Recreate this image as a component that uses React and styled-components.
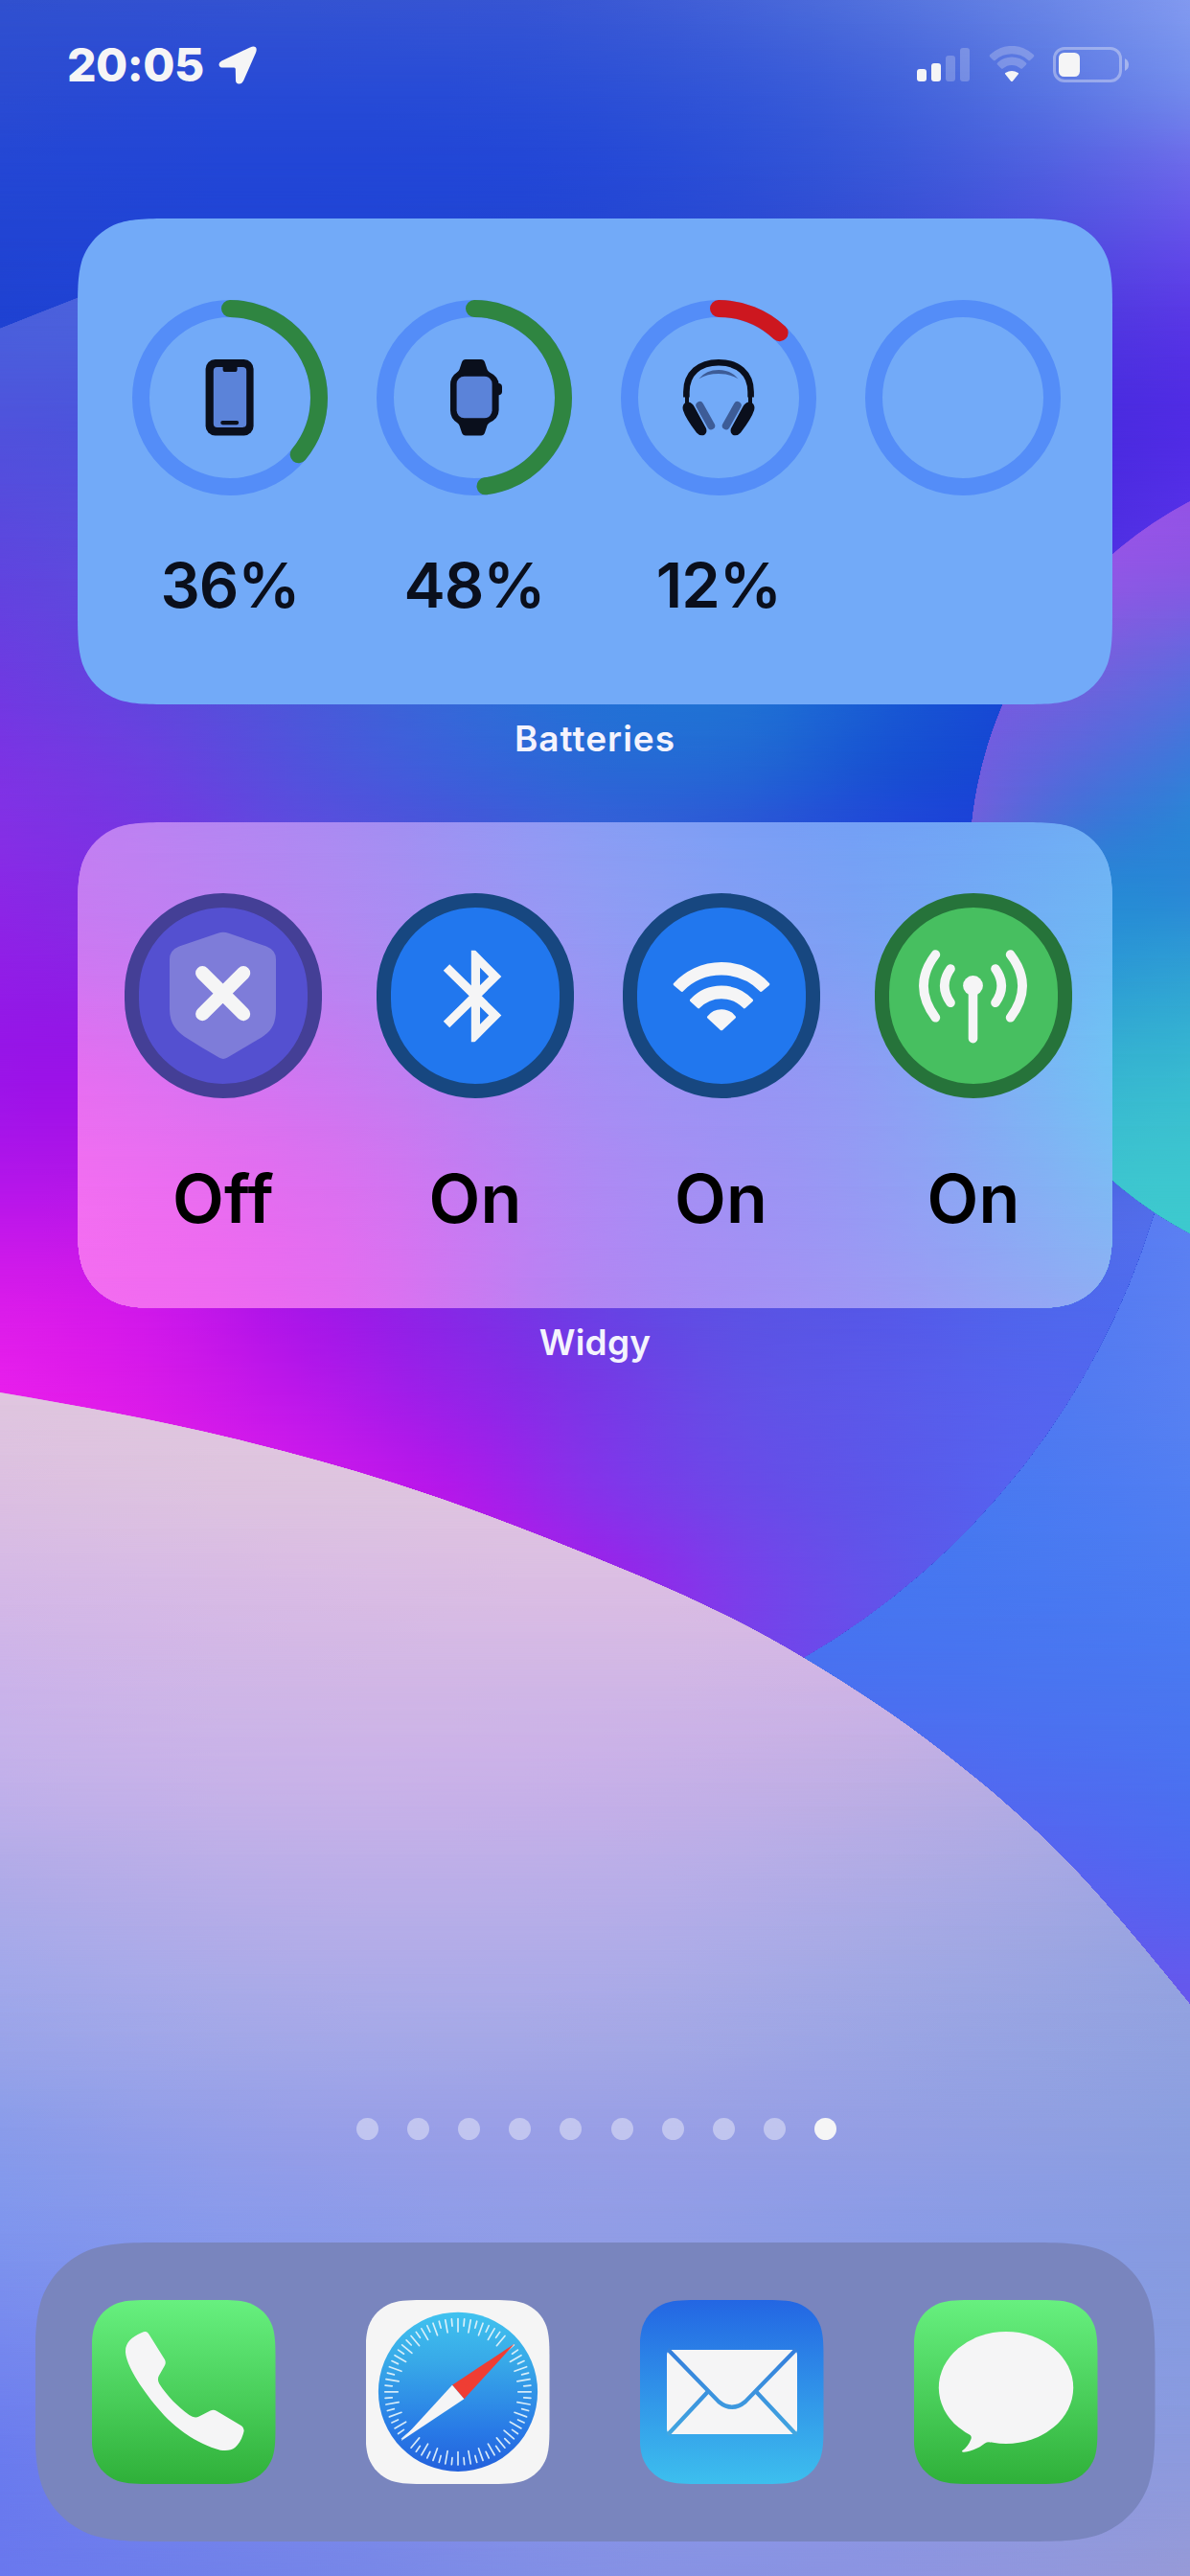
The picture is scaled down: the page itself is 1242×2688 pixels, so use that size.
import React from "react";
import styled, { createGlobalStyle } from "styled-components";

const FONT = `Inter, "Liberation Sans", Arial, sans-serif`;
const WHITE = "#f5f5f6";

const GlobalStyle = createGlobalStyle`
  *, *::before, *::after { box-sizing: border-box; }
  html, body { margin: 0; padding: 0; background: #2346d4; }
`;

/* Continuous-curvature rounded rectangle, as used by iOS surfaces. */
const squircle = (w, h, r) => {
  const a = 1.52866483 * r;
  const b = 1.08849299 * r;
  const c = 0.86840689 * r;
  const d = 0.63149399 * r;
  const e = 0.074911 * r;
  const f = 0.37282392 * r;
  const g = 0.16905899 * r;
  return [
    `M${a} 0H${w - a}`,
    `C${w - b} 0 ${w - c} 0 ${w - d} ${e}`,
    `C${w - f} ${g} ${w - g} ${f} ${w - e} ${d}`,
    `C${w} ${c} ${w} ${b} ${w} ${a}V${h - a}`,
    `C${w} ${h - b} ${w} ${h - c} ${w - e} ${h - d}`,
    `C${w - g} ${h - f} ${w - f} ${h - g} ${w - d} ${h - e}`,
    `C${w - c} ${h} ${w - b} ${h} ${w - a} ${h}H${a}`,
    `C${b} ${h} ${c} ${h} ${d} ${h - e}`,
    `C${f} ${h - g} ${g} ${h - f} ${e} ${h - d}`,
    `C0 ${h - c} 0 ${h - b} 0 ${h - a}V${a}`,
    `C0 ${b} 0 ${c} ${e} ${d}`,
    `C${g} ${f} ${f} ${g} ${d} ${e}`,
    `C${c} 0 ${b} 0 ${a} 0Z`,
  ].join("");
};

/* Tangents of a smooth curve through (xs[i], ys[i]). */
const tangentsOf = (xs, ys) => {
  const slope = xs.slice(1).map((x, i) => (ys[i + 1] - ys[i]) / (x - xs[i]));
  const gap = xs.slice(1).map((x, i) => x - xs[i]);
  const inner = slope.slice(1).map((s, i) => (slope[i] * gap[i + 1] + s * gap[i]) / (gap[i] + gap[i + 1]));
  const first = slope.length > 1 ? 1.5 * slope[0] - 0.5 * inner[0] : slope[0];
  const last = slope.length > 1 ? 1.5 * slope[slope.length - 1] - 0.5 * inner[inner.length - 1] : slope[0];
  return [first, ...inner, last];
};

/* Resample a list of values with STEPS points per span. */
const STEPS = 4;
const resample = (xs, ys) => {
  const m = tangentsOf(xs, ys);
  const out = [];
  for (let i = 0; i < xs.length - 1; i += 1) {
    const w = xs[i + 1] - xs[i];
    for (let s = 0; s < STEPS; s += 1) {
      const t = s / STEPS;
      const t2 = t * t;
      const t3 = t2 * t;
      out.push(
        (2 * t3 - 3 * t2 + 1) * ys[i] + (t3 - 2 * t2 + t) * w * m[i] + (3 * t2 - 2 * t3) * ys[i + 1] + (t3 - t2) * w * m[i + 1]
      );
    }
  }
  out.push(ys[ys.length - 1]);
  return out;
};

const channels = (hex) => [1, 3, 5].map((i) => parseInt(hex.slice(i, i + 2), 16));
const clamp = (v) => Math.max(0, Math.min(255, v)).toFixed(1);

const refine = (rows) => {
  const ys = rows.map(([y]) => y);
  const wide = rows.map(([, colors]) => {
    const xs = colors.map((_, i) => i);
    const rgb = colors.map(channels);
    return [0, 1, 2].map((c) => resample(xs, rgb.map((v) => v[c])));
  });
  const columns = wide[0][0].length;
  const fineY = ys.slice(1).flatMap((y, i) => Array.from({ length: STEPS }, (_, s) => ys[i] + ((y - ys[i]) * s) / STEPS));
  fineY.push(ys[ys.length - 1]);
  const grid = Array.from({ length: columns }, (_, j) => [0, 1, 2].map((c) => resample(ys, wide.map((row) => row[c][j]))));
  return fineY.map((y, i) => [y, grid.map((col) => `rgb(${col.map((v) => clamp(v[i])).join(",")})`)]);
};

/* Smooth path through points, left to right. */
const curveThrough = (points) => {
  const xs = points.map(([x]) => x);
  const ys = points.map(([, y]) => y);
  const m = tangentsOf(xs, ys);
  return points.slice(1).reduce((path, [x, y], i) => {
    const w = (x - xs[i]) / 3;
    return `${path}C${xs[i] + w} ${ys[i] + w * m[i]} ${x - w} ${y - w * m[i + 1]} ${x} ${y}`;
  }, `M${xs[0]} ${ys[0]}`);
};

/* Two-way gradient: each row is a horizontal gradient that fades in over the previous one. */
function Mesh({ id, x, width, rows: knots, clip }) {
  const rows = refine(knots);
  const bottom = rows[rows.length - 1][0];
  return (
    <g clipPath={clip ? `url(#${clip})` : undefined}>
      <defs>
        {rows.map(([, colors], i) => (
          <linearGradient key={i} id={`${id}-row-${i}`} gradientUnits="userSpaceOnUse" x1={x} x2={x + width} y1="0" y2="0">
            {colors.map((color, j) => (
              <stop key={j} offset={j / (colors.length - 1)} stopColor={color} />
            ))}
          </linearGradient>
        ))}
        {rows.slice(1).map(([y], i) => (
          <React.Fragment key={i}>
            <linearGradient id={`${id}-fade-${i + 1}`} gradientUnits="userSpaceOnUse" x1="0" x2="0" y1={rows[i][0]} y2={y}>
              <stop offset="0" stopColor="#fff" stopOpacity="0" />
              <stop offset="1" stopColor="#fff" stopOpacity="1" />
            </linearGradient>
            <mask id={`${id}-mask-${i + 1}`} maskUnits="userSpaceOnUse" x={x} y={rows[i][0]} width={width} height={bottom - rows[i][0]}>
              <rect x={x} y={rows[i][0]} width={width} height={bottom - rows[i][0]} fill={`url(#${id}-fade-${i + 1})`} />
            </mask>
          </React.Fragment>
        ))}
      </defs>
      {rows.map(([y], i) => {
        const start = i === 0 ? y : rows[i - 1][0];
        return (
          <rect
            key={i}
            x={x}
            y={start}
            width={width}
            height={bottom - start}
            fill={`url(#${id}-row-${i})`}
            mask={i === 0 ? undefined : `url(#${id}-mask-${i})`}
          />
        );
      })}
    </g>
  );
}

const SKY = [
  [0, ["#3050cf", "#3453d2", "#3a58d4", "#5473de", "#8299f0"]],
  [100, ["#2a4bd2", "#274ad6", "#2b4fd6", "#4161da", "#7288ec"]],
  [170, ["#2447d4", "#2246d6", "#2549d6", "#3a58d8", "#6c6aea"]],
  [228, ["#2245d3", "#2145d6", "#2447d4", "#3850d6", "#6656ea"]],
  [320, ["#1f42d2", "#2145d6", "#2447d4", "#3c40d6", "#5a3ae6"]],
  [420, ["#1f42d2", "#2145d6", "#2447d4", "#3c30d6", "#502ce4"]],
  [560, ["#1f42d2", "#2145d6", "#2447d4", "#3c2cd6", "#5632e8"]],
  [1250, ["#4f6cf0", "#4f6cf0", "#4f6cf0", "#4f6cf0", "#5c7ff2"]],
  [1450, ["#4a74f0", "#4a74f0", "#4a74f0", "#4a74f0", "#5880f2"]],
  [1650, ["#4675f0", "#4675f0", "#4675f0", "#4676f0", "#4b7cf2"]],
  [1800, ["#4c6cf0", "#4c6cf0", "#4c6cf0", "#4c6ef0", "#4a75f0"]],
  [1940, ["#5c60f0", "#5c60f0", "#5c60f0", "#5c60f0", "#4f69f0"]],
  [2100, ["#6a52ec", "#6a52ec", "#6a52ec", "#6a52ec", "#6955ec"]],
  [2688, ["#6a52ec", "#6a52ec", "#6a52ec", "#6a52ec", "#6955ec"]],
];

const SPHERE = [
  [220, ["#4a64dc", "#4a64dc", "#4060da", "#3060d8", "#2460d6", "#2060d4", "#1858d4", "#1744d4", "#1744d4"]],
  [340, ["#4a5fdc", "#4a60dc", "#4060da", "#3060d8", "#2460d6", "#2060d4", "#1858d4", "#1744d4", "#1744d4"]],
  [450, ["#5052dc", "#4a55dc", "#4060da", "#3060d8", "#2460d6", "#2060d4", "#1858d4", "#1744d4", "#1744d4"]],
  [560, ["#5b48de", "#5550dc", "#4058da", "#3060d8", "#2460d6", "#2060d4", "#1858d4", "#1744d4", "#1744d4"]],
  [735, ["#7238e2", "#6245de", "#4c57da", "#3667d8", "#2470d6", "#2070d4", "#1858d4", "#1744d4", "#1744d4"]],
  [800, ["#7c33e4", "#6c3fe0", "#5252dc", "#3c60da", "#2a68d6", "#2266d4", "#1850d2", "#1644d4", "#1644d4"]],
  [858, ["#8330e5", "#7338e2", "#5c4cde", "#4656da", "#3460d8", "#2a58d6", "#1f48d8", "#1a40d8", "#1a40d8"]],
  [960, ["#8d24e6", "#8030e2", "#704cde", "#4656da", "#3460d8", "#2a58d6", "#1f48d8", "#1a40d8", "#1a40d8"]],
  [1130, ["#9c14e8", "#9a18e6", "#904cde", "#4656da", "#3460d8", "#2a58d6", "#1f48d8", "#1a40d8", "#1a40d8"]],
  [1220, ["#b015ea", "#aa18e6", "#9028de", "#7636da", "#6050e0", "#5850e0", "#5158e0", "#4a60e0", "#4a68e8"]],
  [1365, ["#da1cea", "#cf18ea", "#a816e8", "#8728e6", "#6a40e4", "#5b52e4", "#5559e8", "#4f66ec", "#4f6cf0"]],
  [1450, ["#e71eec", "#d81ae9", "#bb17ea", "#9622e8", "#7838e6", "#6250e6", "#595aea", "#5464ee", "#5068ee"]],
  [1550, ["#ec1eee", "#e21dea", "#d01aec", "#b318ea", "#8533ea", "#6a4ae8", "#5b58ea", "#5564f0", "#5564f0"]],
  [1650, ["#ec1eee", "#e21dea", "#d01aec", "#c518e8", "#9f20ea", "#7940ea", "#6055ea", "#5560ee", "#5560ee"]],
  [1750, ["#ec1eee", "#e21dea", "#d01aec", "#c518e8", "#a820e8", "#783fea", "#6550ec", "#5560ee", "#5560ee"]],
  [1860, ["#ec1eee", "#e21dea", "#d01aec", "#c518e8", "#a820e8", "#783fea", "#6550ec", "#5560ee", "#5560ee"]],
];

const ORB = [
  [460, ["#9a50e6", "#9653e8", "#9054e8"]],
  [590, ["#9a50e6", "#9455e6", "#8c56e4"]],
  [700, ["#7c58e2", "#7360de", "#5f6ade"]],
  [784, ["#745ce0", "#5a68dc", "#3e78da"]],
  [858, ["#7060dc", "#3f74d8", "#2b84d6"]],
  [930, ["#4c74dc", "#2a86d6", "#2a88d6"]],
  [1000, ["#3a84d8", "#2c94d6", "#2e9cd4"]],
  [1100, ["#34a4d4", "#34aed2", "#36b5d1"]],
  [1200, ["#3ab8d2", "#3bc0d0", "#3cc4cf"]],
  [1345, ["#3dc6ce", "#3dcace", "#3dcace"]],
];

const HILL = [
  [1440, ["#e0c6df", "#e0c6df", "#dec3e0", "#dcc0e2", "#d6b8e2"]],
  [1544, ["#dcc0e1", "#dec4df", "#dec3e0", "#dcc0e2", "#d6b8e2"]],
  [1646, ["#d5b9e6", "#d9bce4", "#dbbee3", "#d8bae2", "#ccb2e2"]],
  [1760, ["#cab3ea", "#d0b6e6", "#d0b6e6", "#ccb3e5", "#b8aee2"]],
  [1860, ["#c1b0ea", "#c8b2e8", "#c7b0e8", "#bdaee4", "#a8a8e2"]],
  [1960, ["#b0abe8", "#bbaee8", "#baaee8", "#aeabe5", "#9ca4e2"]],
  [2060, ["#a2a8ea", "#adabe8", "#adabe8", "#a1a8e4", "#94a2e0"]],
  [2140, ["#98a3e9", "#a2a7e8", "#a3a7e6", "#99a4e4", "#90a1e0"]],
  [2220, ["#8a9cea", "#979fe8", "#999fe6", "#949fe4", "#8b9fe0"]],
  [2330, ["#7f95ee", "#8a9aea", "#919de6", "#8a9be6", "#879be0"]],
  [2450, ["#7587ee", "#8090ea", "#8c98e6", "#8a9ae4", "#879be0"]],
  [2570, ["#6a7bee", "#7a88ea", "#8894e6", "#8c98e2", "#8d9add"]],
  [2688, ["#6a78ee", "#7484e9", "#8490e5", "#8c94e1", "#979ad7"]],
];

const GLASS = [
  [0, ["#c180f2", "#aa8bf2", "#8a9df4", "#74a0f6", "#70b0f4"]],
  [127, ["#cb79f2", "#b487f2", "#9499f4", "#7ca1f4", "#6fb9f4"]],
  [254, ["#e36ff1", "#c87af1", "#a38ff4", "#8e9cf4", "#71c2f4"]],
  [380, ["#f16ef1", "#db70f0", "#ae89f4", "#969af4", "#7ebaf4"]],
  [507, ["#f36cf0", "#e46df0", "#b286f3", "#9f97f4", "#90adf4"]],
];

const HILL_RIDGE = [
  [0, 1453],
  [245, 1501.5],
  [412, 1548],
  [570, 1605],
  [840, 1731],
  [982, 1827],
  [1109, 1938],
  [1242, 2092],
];

const Backdrop = styled.svg`
  position: absolute;
  inset: 0;
  width: 100%;
  height: 100%;
  display: block;
`;

function Wallpaper() {
  return (
    <Backdrop viewBox="0 0 1242 2688" aria-hidden="true">
      <defs>
        <clipPath id="sphere-clip">
          <path d="M-40 359L0 343Q40 327 81 311L200 262A807 807 0 0 1 1204 1268A807 807 0 0 1 838 1730L700 1860H-40Z" />
        </clipPath>
        <clipPath id="orb-clip">
          <circle cx="1444" cy="905" r="432" />
        </clipPath>
        <clipPath id="hill-clip">
          <path d={`${curveThrough(HILL_RIDGE)}V2688H0Z`} />
        </clipPath>
      </defs>
      <Mesh id="sky" x={0} width={1242} rows={SKY} />
      <Mesh id="sphere" x={0} width={1242} rows={SPHERE} clip="sphere-clip" />
      <Mesh id="orb" x={1010} width={232} rows={ORB} clip="orb-clip" />
      <Mesh id="hill" x={0} width={1242} rows={HILL} clip="hill-clip" />
    </Backdrop>
  );
}

const Screen = styled.main`
  position: relative;
  display: flex;
  flex-direction: column;
  align-items: center;
  width: 1242px;
  height: 2688px;
  overflow: hidden;
  font-family: ${FONT};
  font-variant-ligatures: none;
  isolation: isolate;
`;

const Layer = styled.div`
  position: relative;
  display: flex;
  flex-direction: column;
  align-items: center;
  width: 100%;
  height: 100%;
`;

/* ---------- status bar ---------- */

const StatusBar = styled.header`
  display: flex;
  justify-content: space-between;
  align-items: flex-start;
  width: 100%;
  height: 228px;
  padding: 48px 63.5px 0 70px;
`;

const ClockGroup = styled.div`
  display: flex;
  align-items: center;
  height: 40px;
`;

const Clock = styled.time`
  width: 158px;
  color: ${WHITE};
  font-size: 48px;
  font-weight: 800;
  line-height: 40px;
  letter-spacing: -0.5px;
  white-space: nowrap;
`;

const StatusIcons = styled.div`
  display: flex;
  align-items: flex-start;
`;

const StatusIcon = styled.svg`
  display: block;
  flex: none;
  margin-left: ${(p) => p.$gap || 0}px;
`;

function Status() {
  return (
    <StatusBar>
      <ClockGroup>
        <Clock>20:05</Clock>
        <StatusIcon width="42" height="41" viewBox="0 0 42 41" fill={WHITE}>
          <path d="M33 1.500Q36.800 -.200 38.800 1.300Q40.500 3 39 7L26 36.500Q24.300 39.800 21.400 39.600Q18.200 39.200 18 36L17.800 24.300Q17.800 22.700 16.300 22.600L3.500 22.500Q.700 22.200 .500 19.300Q.400 17 3.400 15.500Z" />
        </StatusIcon>
      </ClockGroup>
      <StatusIcons>
        <StatusIcon width="55" height="40" viewBox="0 0 55 40" fill={WHITE}>
          <rect x="0" y="24" width="10" height="13" rx="3" />
          <rect x="15" y="18" width="10" height="19" rx="3" />
          <rect x="30" y="10" width="10" height="27" rx="3" opacity="0.24" />
          <rect x="45" y="2" width="10" height="35" rx="3" opacity="0.24" />
        </StatusIcon>
        <StatusIcon $gap={19.5} width="48" height="40" viewBox="0 0 48 40" fill={WHITE}>
          <path opacity="0.24" d="M1.300 11.500Q.100 10.300 1.300 9.100A32.500 32.500 0 0 1 46.700 9.100Q47.900 10.300 46.700 11.500L43.300 14.800Q42.200 15.800 41 14.800A25 25 0 0 0 7 14.800Q5.800 15.800 4.700 14.800Z" />
          <path opacity="0.24" d="M9 19.600Q7.900 18.500 9.100 17.400A21.700 21.700 0 0 1 38.900 17.400Q40.100 18.500 39 19.600L35.200 23.300Q34.100 24.300 32.900 23.300A13.500 13.500 0 0 0 15.100 23.300Q13.900 24.300 12.800 23.300Z" />
          <path d="M17.100 29.200Q16.500 28.400 17.400 27.900Q24 24 30.600 27.900Q31.500 28.400 30.900 29.200L25.100 36.500Q24 37.700 22.900 36.500Z" />
        </StatusIcon>
        <StatusIcon $gap={19.5} width="79.500" height="40" viewBox="0 0 79.500 40">
          <rect x="1.500" y="2.500" width="69" height="34" rx="10.500" fill="none" stroke={WHITE} strokeOpacity="0.38" strokeWidth="3" />
          <rect x="6" y="7" width="22" height="25" rx="5.500" fill={WHITE} />
          <path d="M75 13Q79 15 79 19.500T75 26Z" fill={WHITE} fillOpacity="0.42" />
        </StatusIcon>
      </StatusIcons>
    </StatusBar>
  );
}

/* ---------- widgets ---------- */

const WidgetSlot = styled.section`
  display: flex;
  flex-direction: column;
  align-items: center;
  width: 1080px;
  height: 630px;
`;

const WidgetCard = styled.div`
  position: relative;
  width: 1080px;
  height: 507px;
  background: ${(p) => p.$fill || "none"};
  clip-path: path("${squircle(1080, 507, 67)}");
`;

const WidgetName = styled.h2`
  margin: 13.5px 0 0;
  color: #f4f3fd;
  font-size: 37px;
  font-weight: 600;
  line-height: 44px;
  letter-spacing: ${(p) => p.$spacing}px;
`;

const GaugeGrid = styled.div`
  display: grid;
  grid-template-columns: repeat(4, 255px);
  padding: 84.5px 0 0 31.5px;
`;

const GaugeCell = styled.div`
  display: flex;
  flex-direction: column;
  align-items: center;
`;

const GaugeDial = styled.svg`
  display: block;
  width: 204px;
  height: 204px;
`;

const GaugeValue = styled.span`
  margin-top: 54px;
  color: #0a0f1c;
  font-size: 65px;
  font-weight: 600;
  line-height: 80px;
  letter-spacing: -1px;
`;

const INK = "#0a0f1c";
const SCREEN_TINT = "#5b83d9";

/* Device glyphs share the dial's 204-unit box. */
const PhoneGlyph = () => (
  <g>
    <rect x="76.600" y="60.500" width="50" height="79.500" rx="10" fill={INK} />
    <rect x="84.800" y="68.400" width="34.400" height="63" rx="4" fill={SCREEN_TINT} />
    <path d="M94.600 67.500H109.600V71Q109.600 73.600 107 73.600H97.200Q94.600 73.600 94.600 71Z" fill={INK} />
    <rect x="92.200" y="124.500" width="19" height="4.200" rx="2.100" fill={INK} />
  </g>
);

const WatchGlyph = () => (
  <g>
    <path
      fill={INK}
      d="M93 60.500H109Q112 60.500 113 63.500L115.500 71Q116 72.500 118 74Q127.500 78.500 127.600 87V113.500Q127.500 122 118 126.500Q116 128 115.500 129.500L113 137Q112 140 109 140H93Q90 140 89 137L86.500 129.500Q86 128 84 126.500Q77 122 77 113.500V87Q77 78.500 84 74Q86 72.500 86.500 71L89 63.500Q90 60.500 93 60.500Z"
    />
    <path d="M127 85.500H128Q131 86 131 89.500V94Q131 97.200 128 97.700H127Z" fill={INK} />
    <rect x="83.600" y="78.200" width="37" height="43.600" rx="8" fill={SCREEN_TINT} />
  </g>
);

const HeadphonesGlyph = () => (
  <g fill="none" strokeLinecap="round">
    <path d="M68.400 100V94.500C68.400 75 82 63.700 102 63.700S135.600 75 135.600 94.500V100" stroke={INK} strokeWidth="6.600" strokeLinecap="butt" />
    <path d="M69 97V108M135 97V108" stroke={INK} strokeWidth="4" strokeLinecap="butt" />
    <path d="M81.500 80.800Q89 71.600 102 71.600T122.500 80.800Q114 75.600 102 75.600T81.500 80.800Z" fill="#3d5c97" />
    <path d="M82.300 108.500L94.200 129.800M121.700 108.500L109.800 129.800" stroke="#3d5c97" strokeWidth="8" />
    <path fill={INK} d="M64.700 109.500Q66 104.600 70.500 105Q74.500 105.500 77 110.500L89 132.500Q90.500 137 87 139.400Q82.500 141 79 137Q67.500 122 64.900 113.500Q64.300 111 64.700 109.500Z" />
    <path fill={INK} d="M139.300 109.500Q138 104.600 133.500 105Q129.500 105.500 127 110.500L115 132.500Q113.500 137 117 139.400Q121.500 141 125 137Q136.500 122 139.100 113.500Q139.700 111 139.300 109.500Z" />
  </g>
);

const BATTERIES = [
  { level: 36, color: "#2f8541", Glyph: PhoneGlyph },
  { level: 48, color: "#2f8541", Glyph: WatchGlyph },
  { level: 12, color: "#cd171f", Glyph: HeadphonesGlyph },
  { level: null },
];

function Gauge({ level, color, Glyph }) {
  return (
    <GaugeCell>
      <GaugeDial viewBox="0 0 204 204">
        <circle cx="102" cy="102" r="93" fill="none" stroke="#548df8" strokeWidth="18" />
        {level !== null && (
          <circle
            cx="102"
            cy="102"
            r="93"
            fill="none"
            stroke={color}
            strokeWidth="18"
            strokeLinecap="round"
            pathLength="100"
            strokeDasharray={`${level} ${100 - level}`}
            transform="rotate(-90 102 102)"
          />
        )}
        {Glyph && (
          <g transform="translate(0 1.500)">
            <Glyph />
          </g>
        )}
      </GaugeDial>
      {level !== null && <GaugeValue>{level}%</GaugeValue>}
    </GaugeCell>
  );
}

const GlassFill = styled.svg`
  position: absolute;
  inset: 0;
  width: 100%;
  height: 100%;
`;

const ToggleGrid = styled.div`
  position: relative;
  display: grid;
  grid-template-columns: 263px 256.5px 263.5px 206px;
  padding: 73.5px 0 0 49px;
`;

const ToggleCell = styled.div`
  display: flex;
  flex-direction: column;
  align-items: center;
  width: 206px;
`;

const ToggleButton = styled.div`
  width: 206px;
  height: 214.5px;
  border: 15px solid ${(p) => p.$ring};
  border-radius: 103px;
  background: ${(p) => p.$fill};
`;

const ToggleIcon = styled.svg`
  display: block;
  width: 206px;
  height: 214px;
  margin: -15px;
`;

const ToggleState = styled.span`
  margin-top: 65px;
  color: #000;
  font-size: 70px;
  font-weight: 600;
  line-height: 80px;
  letter-spacing: 0.3px;
`;

/* Toggle glyphs share the button's 206 x 214 box. */
const ShieldGlyph = () => (
  <g>
    <path
      fill="#7e7cd9"
      d="M97.500 41.800Q103 39.800 108.500 41.800L148 55.500Q158 59.500 158 69V121C158 140 151 145 143 150.500Q125 161 107 171.800Q103 174 99 171.800Q80 161 63 150C55 144 47 137 47 121V69Q47 59.500 57 55.500Z"
    />
    <path d="M81.300 83.300L124 126M124 83.300L81.300 126" stroke={WHITE} strokeWidth="14.400" strokeLinecap="round" />
  </g>
);

const BluetoothGlyph = () => (
  <g>
    <clipPath id="bluetooth-clip">
      <rect x="60" y="59.700" width="100" height="95.600" />
    </clipPath>
    <path
      d="M73 77.500L123.800 127.500L103.400 148V66.500L123.800 87L73 137"
      fill="none"
      stroke={WHITE}
      strokeWidth="9.200"
      strokeMiterlimit="6"
      clipPath="url(#bluetooth-clip)"
    />
  </g>
);

const WifiGlyph = () => (
  <g transform="translate(-649.500 -931.500)" fill={WHITE} stroke={WHITE} strokeWidth="3" strokeLinejoin="round">
    <path d="M703.700 1026.500A66 66 0 0 1 801.300 1026.500L793.800 1032.900A58 58 0 0 0 711.200 1032.900Z" />
    <path d="M721 1043.300A43 43 0 0 1 784 1043.300L776.300 1050.300A33 33 0 0 0 728.700 1050.300Z" />
    <path d="M739 1060.800A17 17 0 0 1 766 1060.800L752.500 1073.300Z" />
  </g>
);

const CellularGlyph = () => (
  <g transform="translate(-913 -931.500)" fill="none" stroke={WHITE} strokeWidth="9.600" strokeLinecap="round">
    <circle cx="1015.500" cy="1028" r="10.400" fill={WHITE} stroke="none" />
    <path d="M1015.500 1030V1083.200" />
    <path d="M992 1010.500Q979.500 1028 992 1045.800M976.400 995.600Q951.500 1028 976.400 1061.300" />
    <path d="M1039 1010.500Q1051.500 1028 1039 1045.800M1054.600 995.600Q1079.500 1028 1054.600 1061.300" />
  </g>
);

const TOGGLES = [
  { state: "Off", ring: "#443f96", fill: "#5450d0", Glyph: ShieldGlyph },
  { state: "On", ring: "#174780", fill: "#2177ee", Glyph: BluetoothGlyph },
  { state: "On", ring: "#174780", fill: "#2177ee", Glyph: WifiGlyph },
  { state: "On", ring: "#26733a", fill: "#47bf60", Glyph: CellularGlyph },
];

function Toggle({ state, ring, fill, Glyph }) {
  return (
    <ToggleCell>
      <ToggleButton $ring={ring} $fill={fill}>
        <ToggleIcon viewBox="0 0 206 214">
          <Glyph />
        </ToggleIcon>
      </ToggleButton>
      <ToggleState>{state}</ToggleState>
    </ToggleCell>
  );
}

/* ---------- page dots ---------- */

const PageDots = styled.nav`
  display: flex;
  justify-content: space-between;
  width: 501px;
  margin: 722px 0 0 3px;
`;

const Dot = styled.span`
  width: 23px;
  height: 23px;
  border-radius: 50%;
  background: ${(p) => (p.$active ? WHITE : "rgba(245, 245, 250, 0.45)")};
`;

/* ---------- dock ---------- */

const DockBar = styled.footer`
  display: flex;
  gap: 94px;
  width: 1169px;
  height: 312px;
  margin-top: 107px;
  padding: 60px 0 0 59px;
  background: #7985be;
  clip-path: path("${squircle(1169, 312, 93)}");
`;

const AppIcon = styled.svg`
  display: block;
  flex: none;
  width: 192px;
  height: 192px;
  background: ${(p) => p.$fill};
  clip-path: path("${squircle(192, 192, 43)}");
`;

const GREEN = "linear-gradient(#67f07f, #2fb039)";

const PhoneApp = () => (
  <AppIcon $fill={GREEN} viewBox="0 0 192 192">
    <path
      fill={WHITE}
      d="M56 33Q58 33 59.500 35.700L76 62.300Q77.500 65 76 68.200L69.900 79Q67.800 83 70.300 87.500C79 101 90 111.500 101.500 120Q107 124 111.800 121.500L123.500 115.400Q127 113.800 130 115.800L156 131.300Q159.600 133.800 158.300 138C156.500 145.500 153 150.500 149.500 153.800Q144 158.300 134 156.700C107 149.500 84 131.500 68 112C50 90.500 36 68 35 54.500C34.500 44.500 41 39 52 34Q54.500 32.700 56 33Z"
    />
  </AppIcon>
);

const TICKS = Array.from({ length: 72 }, (_, i) => i).filter((i) => i !== 9 && i !== 45);

const SafariApp = () => (
  <AppIcon $fill="#f5f5f5" viewBox="0 0 192 192">
    <defs>
      <linearGradient id="compass" x1="0" x2="0" y1="0" y2="1">
        <stop offset="0" stopColor="#40c2ef" />
        <stop offset="0.300" stopColor="#38aae8" />
        <stop offset="0.750" stopColor="#2879e6" />
        <stop offset="1" stopColor="#2361dc" />
      </linearGradient>
    </defs>
    <circle cx="96" cy="95.800" r="83.100" fill="url(#compass)" />
    <g stroke="#e4f4fb" strokeWidth="1.700" strokeLinecap="round" opacity="0.920">
      {TICKS.map((i) => (
        <path key={i} d={`M96 19.600V${i % 2 ? 26.8 : 33}`} transform={`rotate(${i * 5} 96 95.800)`} />
      ))}
    </g>
    <path d="M155.200 45.500L90 88.800L102.400 103.300Z" fill="#ef3d33" />
    <path d="M36.600 147L90 88.800L102.400 103.300Z" fill={WHITE} />
  </AppIcon>
);

const MailApp = () => (
  <AppIcon $fill="linear-gradient(#2366e3, #3dbfee)" viewBox="0 0 192 192">
    <defs>
      <linearGradient id="fold" gradientUnits="userSpaceOnUse" x1="0" x2="0" y1="52" y2="140">
        <stop offset="0" stopColor="#347edc" />
        <stop offset="1" stopColor="#42a6e0" />
      </linearGradient>
    </defs>
    <rect x="28" y="52" width="136" height="88" rx="5" fill={WHITE} />
    <g fill="none" stroke="url(#fold)" strokeWidth="4.300">
      <path d="M29 51.500L82 106Q96 117.500 110 106L163 51.500" />
      <path d="M70.500 96L29 140.500M121.500 96L163 140.500" />
    </g>
  </AppIcon>
);

const MessagesApp = () => (
  <AppIcon $fill={GREEN} viewBox="0 0 192 192">
    <ellipse cx="96" cy="91.500" rx="70.200" ry="58.500" fill={WHITE} />
    <path d="M54 137Q61 140.500 59.500 145Q56.500 153 50 157.600Q49.800 158.800 52 158.700C62 157.500 69 153.500 74 149.500Q76.500 147.900 80 148.500L84 140Z" fill={WHITE} />
  </AppIcon>
);

export default function App() {
  return (
    <Screen>
      <GlobalStyle />
      <Wallpaper />
      <Layer>
        <Status />
        <WidgetSlot>
          <WidgetCard $fill="#72aaf8">
            <GaugeGrid>
              {BATTERIES.map((battery, i) => (
                <Gauge key={i} {...battery} />
              ))}
            </GaugeGrid>
          </WidgetCard>
          <WidgetName $spacing={1}>Batteries</WidgetName>
        </WidgetSlot>
        <WidgetSlot>
          <WidgetCard>
            <GlassFill viewBox="0 0 1080 507">
              <Mesh id="glass" x={0} width={1080} rows={GLASS} />
            </GlassFill>
            <ToggleGrid>
              {TOGGLES.map((toggle, i) => (
                <Toggle key={i} {...toggle} />
              ))}
            </ToggleGrid>
          </WidgetCard>
          <WidgetName $spacing={0.2}>Widgy</WidgetName>
        </WidgetSlot>
        <PageDots>
          {Array.from({ length: 10 }, (_, i) => (
            <Dot key={i} $active={i === 9} />
          ))}
        </PageDots>
        <DockBar>
          <PhoneApp />
          <SafariApp />
          <MailApp />
          <MessagesApp />
        </DockBar>
      </Layer>
    </Screen>
  );
}
